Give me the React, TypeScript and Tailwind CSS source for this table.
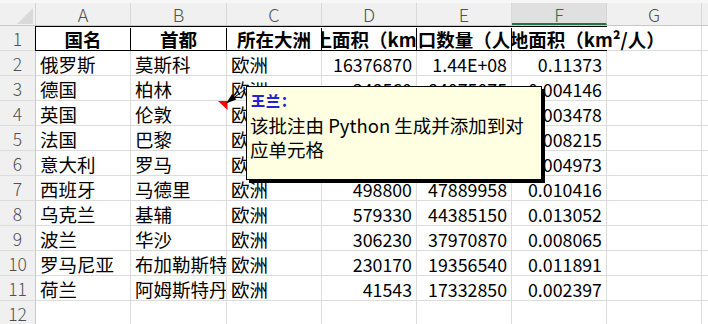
import React from "react";

const widths = [95, 96, 95, 95, 95, 95, 95];
const letters = ["A", "B", "C", "D", "E", "F", "G"];

type Row = [string, string, string, string, string, string];

const rows: Row[] = [
  ["俄罗斯", "莫斯科", "欧洲", "16376870", "1.44E+08", "0.11373"],
  ["德国", "柏林", "欧洲", "348560", "84075075", "0.004146"],
  ["英国", "伦敦", "欧洲", "241930", "69551332", "0.003478"],
  ["法国", "巴黎", "欧洲", "547557", "66650804", "0.008215"],
  ["意大利", "罗马", "欧洲", "295717", "59463000", "0.004973"],
  ["西班牙", "马德里", "欧洲", "498800", "47889958", "0.010416"],
  ["乌克兰", "基辅", "欧洲", "579330", "44385150", "0.013052"],
  ["波兰", "华沙", "欧洲", "306230", "37970870", "0.008065"],
  ["罗马尼亚", "布加勒斯特", "欧洲", "230170", "19356540", "0.011891"],
  ["荷兰", "阿姆斯特丹", "欧洲", "41543", "17332850", "0.002397"],
];

const font = { fontFamily: '"Noto Sans CJK SC", "Noto Sans", sans-serif' };

function RowHead({ n }: { n: number }) {
  return (
    <div className="w-[36px] shrink-0 h-full bg-[#f0f0f0] border-r border-b border-r-[#c8c8c8] border-b-[#dcdcdc] flex justify-center text-[17.5px] leading-[23px] pt-[1px] text-[#505050] font-light">
      {n}
    </div>
  );
}

export default function App() {
  return (
    <div
      className="relative w-[708px] h-[324px] overflow-hidden bg-white text-black"
      style={font}
    >
      {/* top strip */}
      <div className="h-[3px] bg-[#f7f7f7]" />
      {/* column headers */}
      <div className="flex h-[23px] bg-[#f0f0f0] border-b border-[#c8c8c8]">
        <div className="w-[36px] shrink-0 border-r border-[#d4d4d4] flex items-end justify-end pr-[2px] pb-[1px]">
          <div className="w-[16px] h-[16px] bg-[#d9d9d9] [clip-path:polygon(100%_0,100%_100%,0_100%)]" />
        </div>
        {letters.map((l, i) =>
          l === "F" ? (
            <div
              key={l}
              style={{ width: widths[i] }}
              className="shrink-0 h-full bg-[#e0e0e0] border-r border-[#d4d4d4] border-b-2 border-b-[#217346] -mb-px flex justify-center text-[18px] leading-[21px] pt-[1px] text-[#217346] font-light"
            >
              {l}
            </div>
          ) : (
            <div
              key={l}
              style={{ width: widths[i] }}
              className="shrink-0 h-full border-r border-[#d8d8d8] flex justify-center text-[18px] leading-[21px] pt-[1px] text-[#505050] font-light"
            >
              {l}
            </div>
          )
        )}
        <div className="flex-1" />
      </div>

      {/* row 1 */}
      <div className="flex h-[25px]">
        <RowHead n={1} />
        <div className="flex h-full border-t border-l border-black -ml-px text-[18.5px] font-bold leading-[22px] pt-[1px]">
          <div className="w-[95px] shrink-0 border-r border-b border-black flex justify-center overflow-hidden whitespace-nowrap">
            国名
          </div>
          <div className="w-[96px] shrink-0 border-r border-b border-black flex justify-center overflow-hidden whitespace-nowrap">
            首都
          </div>
          <div className="w-[95px] shrink-0 border-r border-b border-black flex justify-center overflow-hidden whitespace-nowrap">
            所在大洲
          </div>
          <div className="w-[95px] shrink-0 border-r border-b border-black flex justify-center overflow-hidden whitespace-nowrap">
            <span className="shrink-0">国土面积（km²）</span>
          </div>
          <div className="w-[95px] shrink-0 border-r border-b border-black flex justify-center overflow-hidden whitespace-nowrap">
            <span className="shrink-0">人口数量（人）</span>
          </div>
          <div className="relative z-10 w-[95px] shrink-0 border-b border-black flex justify-center whitespace-nowrap [clip-path:inset(0_-300px_0_0)]">
            <span className="shrink-0">人均土地面积（km²/人）</span>
          </div>
        </div>
        <div className="w-[95px] shrink-0 h-full border-r border-b border-[#dcdcdc]" />
        <div className="flex-1 border-b border-[#dcdcdc]" />
      </div>

      {/* data rows */}
      {rows.map((r, ri) => (
        <div key={ri} className="flex h-[25px]">
          <RowHead n={ri + 2} />
          {r.map((v, ci) => {
            const num = ci >= 3;
            return (
              <div
                key={ci}
                style={{ width: widths[ci] }}
                className={
                  "shrink-0 h-full border-r border-b border-[#dcdcdc] overflow-hidden whitespace-nowrap pt-[2px] " +
                  (num
                    ? "text-right pr-[4px] text-[17.8px] leading-[22px]"
                    : "pl-[4px] text-[18.5px] leading-[22px]")
                }
              >
                {v}
              </div>
            );
          })}
          <div className="w-[95px] shrink-0 h-full border-r border-b border-[#dcdcdc]" />
          <div className="flex-1 border-b border-[#dcdcdc]" />
        </div>
      ))}

      {/* row 12 */}
      <div className="flex h-[25px]">
        <RowHead n={12} />
        {widths.map((w, i) => (
          <div
            key={i}
            style={{ width: w }}
            className="shrink-0 h-full border-r border-b border-[#dcdcdc]"
          />
        ))}
        <div className="flex-1 border-b border-[#dcdcdc]" />
      </div>

      {/* comment indicator + arrow */}
      <svg
        className="absolute left-[210px] top-[80px]"
        width="40"
        height="34"
        viewBox="210 80 40 34"
      >
        <polygon points="218,101 227.5,101 227.5,110" fill="#ff0000" />
        <line x1="232" y1="99" x2="247" y2="88" stroke="#000" strokeWidth="1" />
        <polygon points="226,103.5 236.3,99.6 232.1,94" fill="#000" />
      </svg>

      {/* comment box */}
      <div className="absolute left-[246px] top-[86px] w-[296px] h-[94px] bg-[#ffffe1] border border-black shadow-[3px_3px_0_0_#000] pl-[3px] pt-[5px]">
        <div className="text-[14px] leading-[16px] font-black text-[#2323d4] pl-[1px] tracking-[1px]">
          王兰：
        </div>
        <div className="mt-[5px] text-[18.5px] leading-[24px] whitespace-nowrap">
          该批注由 Python 生成并添加到对
          <br />
          应单元格
        </div>
      </div>
    </div>
  );
}
